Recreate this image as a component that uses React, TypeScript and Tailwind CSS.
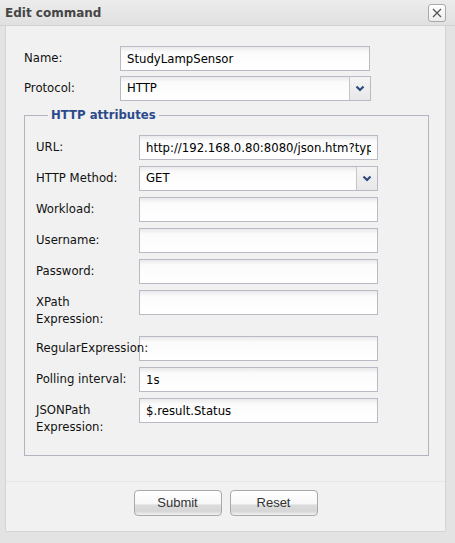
import React from "react";

const font = "font-['DejaVu_Sans',sans-serif] text-[11.7px]";
const inputCls =
    "h-[25px] border border-[#b9bac4] bg-[linear-gradient(to_bottom,#e9e9ec_0px,#fbfbfb_5px,#ffffff_100%)] px-[6px] text-black outline-none " +
    font;

function TextInput({ value = "", className = "" }: { value?: string; className?: string }) {
    return <input readOnly value={value} className={`${inputCls} ${className}`} />;
}

function Select({ value, className = "" }: { value: string; className?: string }) {
    return (
        <div className={`flex h-[25px] border border-[#b9bac4] bg-[linear-gradient(to_bottom,#e9e9ec_0px,#fbfbfb_5px,#ffffff_100%)] ${className}`}>
            <div className="flex flex-1 items-center px-[6px] text-black">{value}</div>
            <div className="flex w-[21px] items-center justify-center border-l border-[#c4c5cc] bg-[linear-gradient(to_bottom,#f4f4f4,#e8e8ea)]">
                <svg width="10" height="7" viewBox="0 0 10 7">
                    <path d="M1.5 1.5 L5 5 L8.5 1.5" fill="none" stroke="#2d4b7d" strokeWidth="2.2" />
                </svg>
            </div>
        </div>
    );
}

const rows: { label: string[]; value?: string; select?: boolean }[] = [
    { label: ["URL:"], value: "http://192.168.0.80:8080/json.htm?type=devices&rid=12" },
    { label: ["HTTP Method:"], value: "GET", select: true },
    { label: ["Workload:"] },
    { label: ["Username:"] },
    { label: ["Password:"] },
    { label: ["XPath", "Expression:"] },
    { label: ["RegularExpression:"] },
    { label: ["Polling interval:"], value: "1s" },
    { label: ["JSONPath", "Expression:"], value: "$.result.Status" },
];

function Button({ children }: { children: React.ReactNode }) {
    return (
        <button className="h-[26px] w-[88px] rounded-[4px] border border-[#a9a9a9] bg-[linear-gradient(to_bottom,#ffffff_0%,#f7f7f7_54%,#dcdcdc_58%,#d6d6d6_84%,#f2f2f2_100%)] font-['Liberation_Sans',Arial,sans-serif] text-[13px] text-[#333]">
            {children}
        </button>
    );
}

export default function App() {
    return (
        <div className={`flex h-[543px] w-[455px] flex-col bg-[#e3e3e3] ${font}`}>
            <div className="flex h-[26px] items-center justify-between border-b border-[#d2d2d2] bg-[linear-gradient(to_bottom,#ececec,#e0e0e0)] pl-[5px] pr-[9px]">
                <span className="text-[12px] font-bold text-[#464646]">Edit command</span>
                <button className="flex h-[18px] w-[18px] items-center justify-center rounded-[3px] border border-[#a9a9a9] bg-[linear-gradient(to_bottom,#ffffff,#ececec)]">
                    <svg width="10" height="10" viewBox="0 0 10 10">
                        <path d="M1 1 L9 9 M9 1 L1 9" stroke="#555" strokeWidth="1.3" />
                    </svg>
                </button>
            </div>

            <div className="mb-[11px] ml-[5px] mr-[9px] flex flex-1 flex-col rounded-b-[2px] border border-t-0 border-[#d4d4d4] bg-[#f1f1f1]">
                <div className="px-[18px] pt-[20px]">
                    <div className="flex items-center">
                        <span className="w-[96px] text-[#111]">Name:</span>
                        <TextInput value="StudyLampSensor" className="w-[250px]" />
                    </div>
                    <div className="mt-[5px] flex items-center">
                        <span className="w-[96px] text-[#111]">Protocol:</span>
                        <Select value="HTTP" className="w-[251px]" />
                    </div>

                    <fieldset className="mt-[6px] w-[405px] border border-[#b3b4c2] pb-[17px] pl-[11px] pt-[11px]">
                        <legend className="ml-[12px] px-[3px] font-bold leading-[17px] text-[#2b4a8c]">HTTP attributes</legend>
                        <div className="flex flex-col gap-[6px]">
                            {rows.map((r) => (
                                <div key={r.label.join(" ")} className={`flex items-start ${r.label.length > 1 ? "min-h-[40px]" : ""}`}>
                                    <div className="relative z-10 w-[103px] whitespace-nowrap pt-[4px] leading-[17px] text-[#111]">
                                        {r.label.map((l) => (
                                            <div key={l}>{l}</div>
                                        ))}
                                    </div>
                                    {r.select ? (
                                        <Select value={r.value ?? ""} className="w-[239px]" />
                                    ) : (
                                        <TextInput value={r.value} className="w-[239px]" />
                                    )}
                                </div>
                            ))}
                        </div>
                    </fieldset>
                </div>

                <div className="mt-[25px] flex flex-1 items-start justify-center gap-[8px] border-t border-[#e6e6e6] pt-[8px]">
                    <Button>Submit</Button>
                    <Button>Reset</Button>
                </div>
            </div>
        </div>
    );
}
